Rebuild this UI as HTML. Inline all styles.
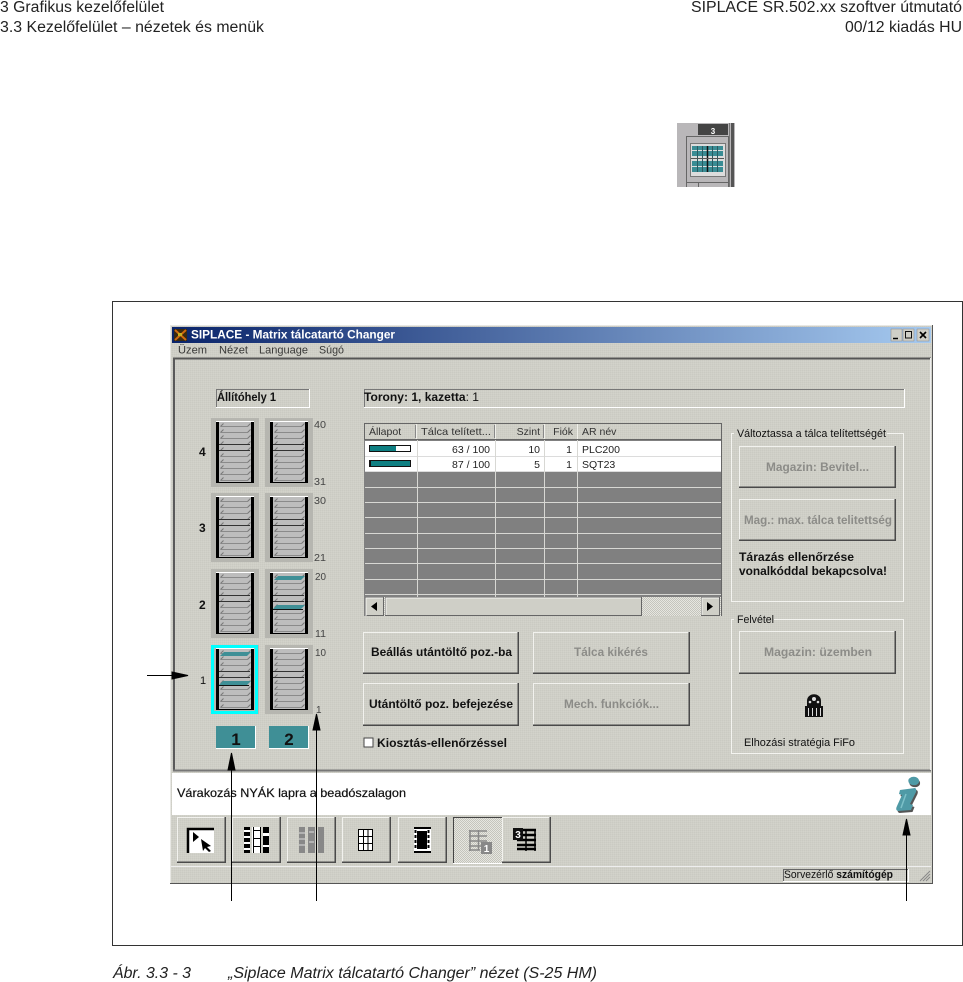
<!DOCTYPE html>
<html lang="hu"><head><meta charset="utf-8"><title>Siplace Matrix</title>
<style>
html,body{margin:0;padding:0;background:#fff;width:963px;height:982px;overflow:hidden}
svg{display:block;font-family:"Liberation Sans",sans-serif}
.ui{font-size:11px;fill:#111}
.b{font-size:12px;font-weight:bold;fill:#111}
.dis{font-size:12px;font-weight:bold;fill:#8c8c88}
.hd{font-size:15.5px;fill:#222}
.cap{font-size:15.5px;font-style:italic;fill:#222}
.n{font-size:10px;fill:#444}
.cell{font-size:10.5px;fill:#222}
.th{font-size:10.5px;fill:#333}
</style></head><body>
<svg xmlns="http://www.w3.org/2000/svg" width="963" height="982" viewBox="0 0 963 982">
<defs>
<linearGradient id="tb" x1="0" x2="1" y1="0" y2="0"><stop offset="0" stop-color="#0a246a"/><stop offset="1" stop-color="#a6caf0"/></linearGradient>
<pattern id="dith" width="2" height="2" patternUnits="userSpaceOnUse"><rect width="2" height="2" fill="#cfcfc7"/><rect width="1" height="1" fill="#cacac2"/><rect x="1" y="1" width="1" height="1" fill="#d3d3cb"/></pattern>
<pattern id="chk" width="2" height="2" patternUnits="userSpaceOnUse"><rect width="2" height="2" fill="#e6e6e0"/><rect width="1" height="1" fill="#c4c4bc"/><rect x="1" y="1" width="1" height="1" fill="#c4c4bc"/></pattern>
<g id="shelf"><path d="M9.500 5.500H36.500" stroke="#8a8a8a" fill="none"/><path d="M9.500 5.500L12.500 2.500M36.500 5.500L39.500 2.500" stroke="#777" fill="none"/></g>
<g id="tile">
<rect x="0" y="0" width="48" height="69" fill="#b6b6b0"/>
<rect x="5" y="3" width="38" height="62" fill="#000"/>
<rect x="5" y="3" width="38" height="1" fill="#fff"/>
<rect x="8" y="4" width="32" height="60" fill="#bdbdbd"/>
<use href="#shelf" y="3"/><use href="#shelf" y="9"/><use href="#shelf" y="15"/><use href="#shelf" y="21"/><use href="#shelf" y="27"/><use href="#shelf" y="33"/><use href="#shelf" y="39"/><use href="#shelf" y="45"/><use href="#shelf" y="51"/><use href="#shelf" y="57"/>
<path d="M8 26.500H39M8 32.500H39" stroke="#333" fill="none"/>
</g>
<g id="teal"><path d="M9 11L13 7H40L36 11Z" fill="#3f8f96"/><path d="M8 40L12 36H40L36 40Z" fill="#3f8f96"/><path d="M8 40.500H38" stroke="#111"/></g>
</defs>

<text x="0" y="12" class="hd" textLength="164" lengthAdjust="spacingAndGlyphs">3 Grafikus kezelőfelület</text>
<text x="0" y="32" class="hd" textLength="264" lengthAdjust="spacingAndGlyphs">3.3 Kezelőfelület – nézetek és menük</text>
<text x="691" y="12" class="hd" textLength="271" lengthAdjust="spacingAndGlyphs">SIPLACE SR.502.xx szoftver útmutató</text>
<text x="845" y="32" class="hd" textLength="117" lengthAdjust="spacingAndGlyphs">00/12 kiadás HU</text>

<!-- top icon -->
<rect x="677" y="123" width="58" height="64" fill="#b9b7b9"/>
<rect x="698" y="124" width="30" height="11" fill="#444"/>
<text x="713" y="134" font-size="8" font-weight="bold" fill="#fff" text-anchor="middle">3</text>
<rect x="729" y="123" width="1" height="64" fill="#777"/><rect x="731" y="123" width="3" height="64" fill="#555"/>
<path d="M686.500 187V136.500H728.500V187M686.500 182.500H728.500M698.500 182.500V187" fill="none" stroke="#666"/>
<rect x="690.500" y="143.500" width="35" height="33" fill="#dcdcdc" stroke="#777"/>
<g fill="#3a8c94"><rect x="692" y="146" width="31" height="4"/><rect x="692" y="151" width="31" height="5"/><rect x="692" y="161" width="31" height="5"/><rect x="692" y="167" width="31" height="5"/></g>
<path d="M697.500 146V172M702.500 146V172M712.500 146V172M717.500 146V172" stroke="#2a5a60" fill="none"/><path d="M707.500 146V172" stroke="#111" stroke-width="1.500"/>
<path d="M691 158.500H724" stroke="#555"/>

<!-- frame -->
<rect x="112.500" y="301.500" width="850" height="644" fill="#fff" stroke="#333"/>

<!-- window -->
<rect x="170" y="325" width="763" height="558" fill="url(#dith)"/>
<path d="M170.500 883V325.500H932" stroke="#e8e8e4" fill="none"/>
<path d="M170 883.500H933M932.500 325V883" stroke="#555" fill="none"/>
<rect x="172" y="327" width="759" height="16" fill="url(#tb)"/>
<rect x="174" y="329" width="13" height="12" fill="#3a2a10"/><path d="M175 330L186 340M186 330L175 340" stroke="#d06a10" stroke-width="2"/><rect x="178" y="333" width="4" height="3" fill="#c8b020"/>
<text x="191" y="338.500" font-size="12" font-weight="bold" fill="#fff" textLength="204" lengthAdjust="spacingAndGlyphs">SIPLACE - Matrix tálcatartó Changer</text>
<g><rect x="891" y="329" width="11" height="12" fill="#cfcfc7" stroke="#888" stroke-width=".5"/><rect x="903" y="329" width="11" height="12" fill="#cfcfc7" stroke="#888" stroke-width=".5"/><rect x="917" y="329" width="12" height="12" fill="#cfcfc7" stroke="#888" stroke-width=".5"/>
<path d="M893 338.500H898" stroke="#000" stroke-width="1.500"/><rect x="905.500" y="331.500" width="6" height="6.500" fill="none" stroke="#111"/><path d="M920 332L926 338M926 332L920 338" stroke="#000" stroke-width="1.600"/></g>
<g style="opacity:.8"><text x="178" y="353.500" class="ui" textLength="29" lengthAdjust="spacingAndGlyphs">Üzem</text><text x="219" y="353.500" class="ui" textLength="29" lengthAdjust="spacingAndGlyphs">Nézet</text><text x="259" y="353.500" class="ui" textLength="49" lengthAdjust="spacingAndGlyphs">Language</text><text x="319" y="353.500" class="ui" textLength="25" lengthAdjust="spacingAndGlyphs">Súgó</text></g>
<path d="M173 358.500H931" stroke="#555" stroke-width="2"/><path d="M174 358V770" stroke="#5a5a5a" stroke-width="2"/>
<path d="M173 770.500H931" stroke="#777" stroke-width="2"/>
<path d="M930.500 358V770" stroke="#eee"/>

<!-- info boxes -->
<path d="M216.500 407V389.500H310" stroke="#777" fill="none"/><path d="M216 407.500H309.500V389" stroke="#fff" fill="none"/>
<text x="217" y="401" class="b" textLength="59" lengthAdjust="spacingAndGlyphs">Állítóhely 1</text>
<path d="M364.500 407V389.500H905" stroke="#777" fill="none"/><path d="M364 407.500H904.500V389" stroke="#fff" fill="none"/>
<text x="364" y="401" class="b" textLength="115" lengthAdjust="spacingAndGlyphs">Torony: 1, kazetta<tspan font-weight="normal">: 1</tspan></text>

<!-- magazines -->
<use href="#tile" x="211" y="418"/><use href="#tile" x="265" y="418"/>
<use href="#tile" x="211" y="493"/><use href="#tile" x="265" y="493"/>
<use href="#tile" x="211" y="569"/><use href="#tile" x="265" y="569"/><use href="#teal" x="265" y="569"/>
<use href="#tile" x="211" y="645"/><use href="#tile" x="265" y="645"/><use href="#teal" x="211" y="645"/>
<rect x="212.500" y="646.500" width="44" height="66" fill="none" stroke="#00ffff" stroke-width="3"/>
<text x="199" y="456" class="b">4</text><text x="199" y="532" class="b">3</text><text x="199" y="609" class="b">2</text><text x="200" y="684" class="ui">1</text>
<text x="314" y="428" class="n" textLength="12" lengthAdjust="spacingAndGlyphs">40</text><text x="314" y="485" class="n" textLength="12" lengthAdjust="spacingAndGlyphs">31</text>
<text x="314" y="504" class="n" textLength="12" lengthAdjust="spacingAndGlyphs">30</text><text x="314" y="561" class="n" textLength="12" lengthAdjust="spacingAndGlyphs">21</text>
<text x="315" y="580" class="n" textLength="11" lengthAdjust="spacingAndGlyphs">20</text><text x="315" y="637" class="n" textLength="11" lengthAdjust="spacingAndGlyphs">11</text>
<text x="315" y="656" class="n" textLength="11" lengthAdjust="spacingAndGlyphs">10</text><text x="316" y="713" class="n">1</text>
<rect x="216" y="726" width="40" height="23" fill="#3f8f96"/><path d="M216 748.500H256M255.500 726V749" stroke="#fff"/>
<rect x="269" y="726" width="40" height="23" fill="#3f8f96"/><path d="M269 748.500H309M308.500 726V749" stroke="#fff"/>
<text x="236" y="745" font-size="17" font-weight="bold" fill="#111" text-anchor="middle">1</text>
<text x="289" y="745" font-size="17" font-weight="bold" fill="#111" text-anchor="middle">2</text>

<!-- table -->
<rect x="364" y="423" width="357" height="193" fill="#808080"/>
<rect x="364" y="423" width="357" height="17" fill="url(#dith)"/>
<path d="M364.500 440V423.500H721M364 439.500H721M721.500 423V616" stroke="#666" fill="none"/>
<path d="M416.500 424V439M495.500 424V439M544.500 424V439M577.500 424V439" stroke="#f0f0ea"/>
<path d="M415.500 425V438M494.500 425V438M543.500 425V438" stroke="#888"/>
<text x="369" y="435" class="th">Állapot</text><text x="421" y="435" class="th" textLength="70" lengthAdjust="spacingAndGlyphs">Tálca telített...</text>
<text x="540" y="435" class="th" text-anchor="end">Szint</text><text x="573" y="435" class="th" text-anchor="end">Fiók</text><text x="582" y="435" class="th">AR név</text>
<rect x="365" y="441" width="356" height="31" fill="#fff"/>
<g stroke="#dcdcdc"><path d="M365 456.500H721M365 471.500H721"/></g>
<g stroke="#d8d8d4" fill="none"><path d="M365 487.500H721M365 502.500H721M365 517.500H721M365 533.500H721M365 548.500H721M365 563.500H721M365 579.500H721M365 594.500H721"/></g>
<path d="M417.500 440V597M495.500 440V597M544.500 440V597M577.500 440V597" stroke="#d8d8d4"/>
<rect x="369" y="445" width="42" height="7" fill="#111"/><rect x="370" y="446" width="26" height="5" fill="#0e7f82"/><rect x="396" y="446" width="14" height="5" fill="#fff"/>
<rect x="369" y="460" width="42" height="7" fill="#111"/><rect x="371" y="461" width="39" height="5" fill="#0e7f82"/>
<text x="490" y="453" class="cell" text-anchor="end">63 / 100</text><text x="540" y="453" class="cell" text-anchor="end">10</text><text x="572" y="453" class="cell" text-anchor="end">1</text><text x="582" y="453" class="cell">PLC200</text>
<text x="490" y="468" class="cell" text-anchor="end">87 / 100</text><text x="540" y="468" class="cell" text-anchor="end">5</text><text x="572" y="468" class="cell" text-anchor="end">1</text><text x="582" y="468" class="cell">SQT23</text>
<!-- scrollbar -->
<rect x="365" y="597" width="356" height="19" fill="url(#chk)"/>
<g fill="#cfcfc7" stroke="#666"><rect x="365.500" y="597.500" width="18" height="18"/><rect x="385.500" y="597.500" width="256" height="18"/><rect x="701.500" y="597.500" width="18" height="18"/></g>
<path d="M366 616V598H383M386 615V598H641M702 615V598H719" stroke="#f4f4f0" fill="none"/>
<path d="M377 602V611L371 606.500Z" fill="#000"/><path d="M707 602V611L713 606.500Z" fill="#000"/>

<!-- buttons -->
<g fill="none">
<g stroke="#f2f2ee"><path d="M363.500 674V632.500H519"/><path d="M363.500 726V683.500H519"/><path d="M533.500 674V632.500H690"/><path d="M533.500 726V683.500H690"/><path d="M739.500 488V446.500H896"/><path d="M739.500 541V499.500H896"/><path d="M739.500 674V631.500H896"/><path d="M177.500 863V817.500H226"/><path d="M232.500 863V817.500H281"/><path d="M287.500 863V817.500H336"/><path d="M342.500 863V817.500H391"/><path d="M398.500 863V817.500H447"/><path d="M502.500 863V817.500H551"/></g>
<g stroke="#4a4a4a" stroke-width="1.500"><path d="M363 673.250H518.250V632"/><path d="M363 725.250H518.250V683"/><path d="M533 673.250H689.250V632"/><path d="M533 725.250H689.250V683"/><path d="M739 487.250H895.250V446"/><path d="M739 540.250H895.250V499"/><path d="M739 673.250H895.250V631"/><path d="M177 862.250H225.250V817"/><path d="M232 862.250H280.250V817"/><path d="M287 862.250H335.250V817"/><path d="M342 862.250H390.250V817"/><path d="M398 862.250H446.250V817"/><path d="M502 862.250H550.250V817"/></g>
</g>
<text x="371" y="656" class="b" textLength="141" lengthAdjust="spacingAndGlyphs">Beállás utántöltő poz.-ba</text>
<text x="369" y="708" class="b" textLength="144" lengthAdjust="spacingAndGlyphs">Utántöltő poz. befejezése</text>
<text x="574" y="656" class="dis" textLength="74" lengthAdjust="spacingAndGlyphs">Tálca kikérés</text>
<text x="564" y="708" class="dis" textLength="95" lengthAdjust="spacingAndGlyphs">Mech. funkciók...</text>
<text x="766" y="471" class="dis" textLength="103" lengthAdjust="spacingAndGlyphs">Magazin: Bevitel...</text>
<text x="744" y="524" class="dis" textLength="148" lengthAdjust="spacingAndGlyphs">Mag.: max. tálca telitettség</text>
<text x="764" y="656" class="dis" textLength="108" lengthAdjust="spacingAndGlyphs">Magazin: üzemben</text>
<rect x="364" y="738" width="9" height="9" fill="#fff" stroke="#444"/>
<text x="377" y="747" class="b" textLength="130" lengthAdjust="spacingAndGlyphs">Kiosztás-ellenőrzéssel</text>

<!-- groups -->
<path d="M734 433.500H731.500V601.500H903.500V433.500H887" fill="none" stroke="#f4f4f0"/>
<text x="737" y="437" class="ui" textLength="149" lengthAdjust="spacingAndGlyphs">Változtassa a tálca telítettségét</text>
<text x="739" y="561" class="b" textLength="115" lengthAdjust="spacingAndGlyphs">Tárazás ellenőrzése</text>
<text x="739" y="575" class="b" textLength="148" lengthAdjust="spacingAndGlyphs">vonalkóddal bekapcsolva!</text>
<path d="M734 619.500H731.500V753.500H903.500V619.500H774" fill="none" stroke="#f4f4f0"/>
<text x="737" y="623" class="ui" textLength="37" lengthAdjust="spacingAndGlyphs">Felvétel</text>
<path d="M807 706V701C807 692 821 692 821 701V706Z" fill="#111"/><circle cx="814" cy="699" r="2" fill="#ddd"/><circle cx="810" cy="702" r="1.300" fill="#ddd"/><circle cx="818" cy="702" r="1.300" fill="#ddd"/>
<rect x="805" y="706" width="18" height="11" fill="#111"/><path d="M808.500 708V716M812.500 708V716M816.500 708V716M820.500 708V716" stroke="#ddd"/>
<text x="744" y="746" class="ui" textLength="111" lengthAdjust="spacingAndGlyphs">Elhozási stratégia FiFo</text>

<!-- message -->
<rect x="172" y="773" width="759" height="42" fill="#fff"/>
<text x="177" y="797" font-size="12" fill="#111" style="stroke:#111;stroke-width:.2" textLength="229" lengthAdjust="spacingAndGlyphs">Várakozás NYÁK lapra a beadószalagon</text>
<path d="M910 779C914 776 920 779 919 783C918 787 911 787 909 784C908 782 908 780 910 779Z" fill="#555" transform="translate(1,1)"/>
<path d="M900 791L915 789Q917 790 916 793L910 805L913 806L911 811L898 812Q895 811 897 807L902 796L899 795Z" fill="#555" transform="translate(1.500,1)"/>
<path d="M910 778C914 775 920 778 919 782C918 786 911 786 909 783C908 781 908 779 910 778Z" fill="#4f9aa6"/>
<path d="M900 790L915 788Q917 789 916 792L910 804L913 805L911 810L898 811Q895 810 897 806L902 795L899 794Z" fill="#4f9aa6"/>
<path d="M906 794L901 808" stroke="#7cc0c8" stroke-width="1.500"/>

<!-- toolbar icons -->
<rect x="187" y="828" width="27" height="25" fill="#fff"/><path d="M188 853V829H214" stroke="#000" stroke-width="2.500" fill="none"/>
<path d="M193 832L199 837L193 842Z" fill="#000"/><path d="M201 839L211 846L207 847L211 851L209 852L205 848L203 851Z" fill="#000"/>
<g><rect x="244" y="827" width="6" height="26" fill="#000"/><rect x="244" y="830" width="6" height="2" fill="#fff"/><rect x="244" y="836" width="6" height="2" fill="#fff"/><rect x="244" y="842" width="6" height="2" fill="#fff"/><rect x="244" y="848" width="6" height="2" fill="#fff"/>
<rect x="252" y="827" width="9" height="26" fill="#fff"/><path d="M253.500 827V853M260.500 827V853M253 830.500H261M253 838.500H261M253 846.500H261" stroke="#000" fill="none"/>
<rect x="263" y="827" width="6" height="26" fill="#000"/><rect x="263" y="833" width="6" height="3" fill="#fff"/><rect x="263" y="845" width="6" height="2" fill="#fff"/></g>
<g fill="#888"><rect x="299" y="827" width="6" height="26"/><rect x="318" y="827" width="6" height="26"/><rect x="308" y="827" width="7" height="26"/></g><path d="M299 833H305M299 839H305M299 845H305M309 832H314M309 842H314" stroke="#ddd"/>
<rect x="358.500" y="829.500" width="14" height="21" fill="#fff" stroke="#000"/><path d="M363.500 830V850M368 830V850M359 836.500H372M359 843.500H372" stroke="#000"/>
<rect x="414" y="827" width="17" height="26" fill="#fff"/><rect x="417" y="831" width="10" height="18" fill="#000"/><path d="M414 828H431M414 852H431" stroke="#000" stroke-width="2"/><path d="M415.500 830V850M428.500 830V850" stroke="#000" stroke-width="2" stroke-dasharray="3 2"/>
<rect x="453" y="817" width="49" height="46" fill="url(#chk)"/><path d="M453.500 863V817.500H502" stroke="#444" fill="none"/><path d="M453 863.500H502" stroke="#fff"/>
<g stroke="#888" fill="none"><path d="M469 831H487M469 836H487M469 841H487M469 846H487M469 850H480M478.500 830V850M470 830V851" stroke-width="1.500"/></g><rect x="481" y="842" width="11" height="12" fill="#888"/><text x="486.500" y="852" font-size="10" font-weight="bold" fill="#fff" text-anchor="middle">1</text>
<path d="M517 830H536M517 835H536M517 840H536M517 845H536M517 849H536" stroke="#000" stroke-width="2.500"/><path d="M526 829V851M535 829V851" stroke="#000" stroke-width="1.500"/>
<rect x="513" y="828" width="10" height="12" fill="#111"/><text x="518" y="838" font-size="10" font-weight="bold" fill="#fff" text-anchor="middle">3</text>

<!-- status -->
<path d="M171 866.500H931" stroke="#eee"/>
<path d="M783.500 881V869.500H909" stroke="#666" fill="none"/><path d="M783 881.500H908.500V869" stroke="#fff" fill="none"/>
<text x="784" y="878" class="ui" textLength="109" lengthAdjust="spacingAndGlyphs">Sorvezérlő <tspan font-weight="bold">számítógép</tspan></text>
<path d="M923 881L930 874M926 881L930 877M920 881L930 871" stroke="#888"/>

<!-- arrows -->
<g stroke="#000" fill="#000">
<path d="M147 675.500H175" fill="none"/><path d="M172 672L188 675.500L172 679Z"/>
<path d="M231.500 768V901" fill="none"/><path d="M228 770L231.500 753L235 770Z"/>
<path d="M316.500 730V901" fill="none"/><path d="M313 730L316.500 714L320 730Z"/>
<path d="M906.500 835V901" fill="none"/><path d="M903 835L906.500 819L910 835Z"/>
</g>

<text x="113" y="978" class="cap" textLength="78" lengthAdjust="spacingAndGlyphs">Ábr. 3.3 - 3</text>
<text x="228" y="978" class="cap" textLength="369" lengthAdjust="spacingAndGlyphs">„Siplace Matrix tálcatartó Changer” nézet (S-25 HM)</text>
</svg>
</body></html>
